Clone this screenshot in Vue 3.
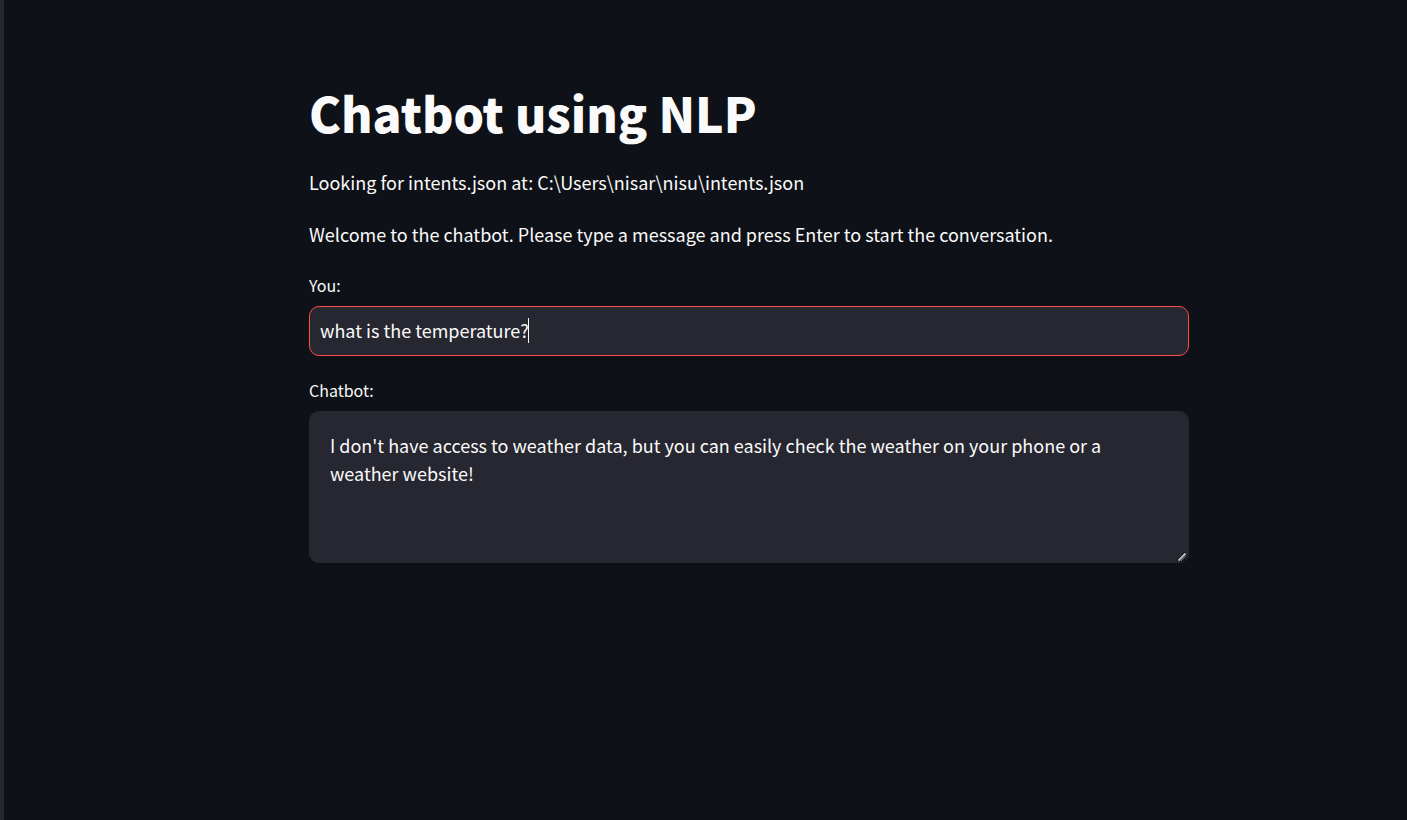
<script setup>
import { ref, onMounted, watch } from 'vue'

const message = ref('what is the temperature?')
const reply = ref("I don't have access to weather data, but you can easily check the weather on your phone or a weather website!")
const box = ref(null)
const caretX = ref(0)

function placeCaret() {
  const style = getComputedStyle(box.value)
  const ctx = document.createElement('canvas').getContext('2d')
  ctx.font = `${style.fontSize} ${style.fontFamily}`
  caretX.value = Math.round(ctx.measureText(message.value).width) + 10
}

onMounted(() => {
  box.value.focus()
  placeCaret()
})
watch(message, placeCaret)
</script>

<template>
  <div class="app">
    <main class="block">
      <h1>Chatbot using NLP</h1>
      <p>Looking for intents.json at: C:\Users\nisar\nisu\intents.json</p>
      <p>Welcome to the chatbot. Please type a message and press Enter to start the conversation.</p>
      <div class="field">
        <label for="you">You:</label>
        <div class="control">
          <input id="you" ref="box" v-model="message" type="text" autocomplete="off" spellcheck="false" />
          <span class="caret" :style="{ left: caretX + 'px' }"></span>
        </div>
      </div>
      <div class="field">
        <label for="bot">Chatbot:</label>
        <div class="control">
          <textarea id="bot" v-model="reply" spellcheck="false"></textarea>
          <svg class="grip" width="10" height="10" viewBox="0 0 10 10" aria-hidden="true">
            <path d="M0 8.5L8 0.5M5 9.5L9.5 5" stroke="#0e1117" stroke-width="1.5" />
            <path d="M1.5 8.5L8.5 1.5" stroke="#bdbdbd" stroke-width="2" />
            <path d="M4 9L8.5 4.5" stroke="#77787d" stroke-width="1" />
          </svg>
        </div>
      </div>
    </main>
  </div>
</template>

<style>
body {
  background: #0e1117;
}
</style>

<style scoped>
.app {
  min-height: 100vh;
  box-sizing: border-box;
  border-left: 4px solid #262730;
  padding: 80px 218px 80px 305px;
  color: #fafafa;
  font-family: "Noto Sans CJK SC", "Noto Sans", sans-serif;
  font-size: 18px;
  line-height: 30px;
}
.block {
  display: flex;
  flex-direction: column;
  gap: 20px;
}
h1 {
  margin: 0;
  padding-bottom: 3px;
  font-size: 48px;
  line-height: 64px;
  font-weight: 900;
}
p {
  margin: 0;
  padding-bottom: 2px;
}
.field {
  display: flex;
  flex-direction: column;
  gap: 7px;
}
.control {
  position: relative;
}
label {
  font-size: 16px;
  line-height: 28px;
}
input,
textarea {
  display: block;
  box-sizing: border-box;
  width: 100%;
  margin: 0;
  border: 1px solid #262730;
  border-radius: 10px;
  outline: none;
  background: #262730;
  color: #fafafa;
  font-family: inherit;
  font-size: 18px;
}
input {
  height: 50px;
  padding: 0 10px 2px;
  caret-color: transparent;
}
input:focus {
  border-color: #ff4b4b;
}
.caret {
  display: none;
  position: absolute;
  top: 12px;
  width: 1px;
  height: 25px;
  background: #fafafa;
  pointer-events: none;
}
input:focus + .caret {
  display: block;
}
textarea {
  height: 152px;
  padding: 19px 20px;
  line-height: 28px;
  resize: vertical;
}
textarea::-webkit-resizer {
  background: transparent;
}
.grip {
  position: absolute;
  right: 2px;
  bottom: 1px;
  pointer-events: none;
}
</style>
